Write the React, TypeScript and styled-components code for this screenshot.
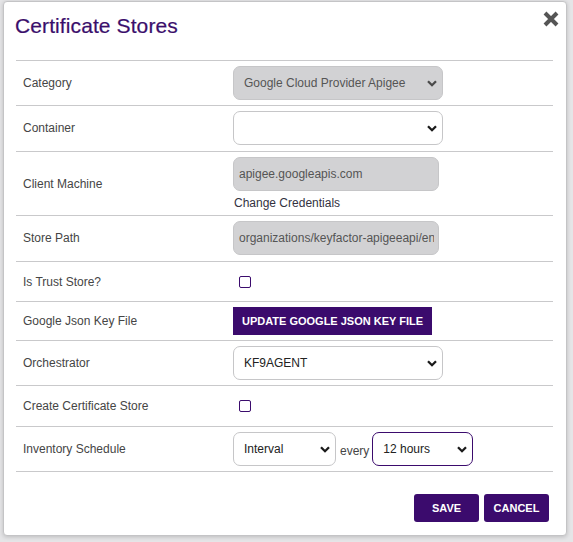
import React from "react";
import styled, { createGlobalStyle } from "styled-components";

const PURPLE = "#3b0b6d";

const GlobalStyle = createGlobalStyle`
  html, body {
    margin: 0;
    padding: 0;
    background: #e5e5e7;
    font-family: "Liberation Sans", Arial, sans-serif;
  }
  * { box-sizing: border-box; }
`;

const Page = styled.div`
  width: 573px;
  height: 542px;
  padding: 1px 0 0 3px;
  background: #e5e5e7;
  overflow: hidden;
`;

const Dialog = styled.div`
  width: 564px;
  background: #fff;
  border: 1px solid #c4c4c6;
  border-radius: 4px;
  box-shadow: 0 1px 4px rgba(0, 0, 0, 0.18);
  padding: 0 13px 13px 12px;
  display: flex;
  flex-direction: column;
`;

const Header = styled.div`
  height: 58px;
  display: flex;
  justify-content: space-between;
  align-items: flex-start;
  margin: 0 -6px 0 -1px;
`;

const Title = styled.h1`
  margin: 12px 0 0;
  font-size: 21px;
  line-height: 24px;
  font-weight: normal;
  color: #3a0e6b;
  letter-spacing: 0.1px;
  -webkit-text-stroke: 0.2px #3a0e6b;
`;

const CloseButton = styled.button`
  margin-top: 9px;
  padding: 0;
  border: 0;
  background: none;
  width: 16px;
  height: 16px;
  display: flex;
  cursor: pointer;
`;

const Table = styled.div`
  display: flex;
  flex-direction: column;
  border-bottom: 1px solid #c9c9cb;
`;

const Row = styled.div<{ $padB?: number }>`
  display: grid;
  grid-template-columns: 217px 1fr;
  align-items: center;
  border-top: 1px solid #c9c9cb;
  padding: 5px 0 ${(p) => p.$padB ?? 5}px;
`;

const Label = styled.div`
  padding-left: 7px;
  font-size: 12px;
  color: #454545;
`;

const Cell = styled.div<{ $inline?: boolean; $minH?: number }>`
  display: flex;
  flex-direction: ${(p) => (p.$inline ? "row" : "column")};
  align-items: ${(p) => (p.$inline ? "center" : "flex-start")};
  justify-content: ${(p) => (p.$inline ? "flex-start" : "center")};
  min-height: ${(p) => p.$minH ?? 28}px;
`;

const SelectWrap = styled.div<{ $w: number }>`
  position: relative;
  width: ${(p) => p.$w}px;
  height: 34px;
  flex: none;
`;

const Select = styled.select<{ $focus?: boolean }>`
  appearance: none;
  -webkit-appearance: none;
  width: 100%;
  height: 100%;
  border-radius: 7px;
  border: 1px solid ${(p) => (p.$focus ? PURPLE : "#c6c6c8")};
  background: #fff;
  padding: 0 24px 0 10px;
  font-family: inherit;
  font-size: 12px;
  color: #222;
  outline: none;
  &:disabled {
    background: #d2d2d4;
    color: #555;
    opacity: 1;
  }
`;

const Chevron = styled.svg<{ $muted?: boolean }>`
  position: absolute;
  right: 6px;
  top: 50%;
  margin-top: -3px;
  width: 10px;
  height: 7px;
  pointer-events: none;
  stroke: ${(p) => (p.$muted ? "#4a4a4a" : "#1a1a1a")};
`;

const TextInput = styled.input`
  width: 206px;
  height: 34px;
  border-radius: 7px;
  border: 1px solid #c6c6c8;
  background: #d2d2d4;
  padding: 0 4px 0 5px;
  font-family: inherit;
  font-size: 12px;
  color: #555;
  -webkit-text-fill-color: #555;
  opacity: 1;
  outline: none;
`;

const LinkText = styled.a`
  margin-top: 5px;
  line-height: 14px;
  font-size: 12px;
  color: #33323f;
  text-decoration: none;
  padding-left: 1px;
  cursor: pointer;
`;

const Checkbox = styled.input`
  appearance: none;
  -webkit-appearance: none;
  width: 12px;
  height: 12px;
  margin: 0 0 0 6px;
  border: 1.5px solid ${PURPLE};
  border-radius: 2px;
  background: #fff;
`;

const PrimaryButton = styled.button<{ $w?: number }>`
  height: 28px;
  min-width: ${(p) => (p.$w ? `${p.$w}px` : "auto")};
  padding: 0 8px;
  border: 0;
  border-radius: ${(p) => (p.$w ? "3px" : "0")};
  background: ${PURPLE};
  color: #fff;
  font-family: inherit;
  font-size: 11px;
  font-weight: bold;
  text-transform: uppercase;
  white-space: nowrap;
  cursor: pointer;
`;

const WideButton = styled(PrimaryButton)`
  width: 199px;
  padding: 0;
`;

const Every = styled.span`
  font-size: 12px;
  color: #454545;
  margin: 4px 3px 0 4px;
`;

const Footer = styled.div`
  display: flex;
  justify-content: flex-end;
  gap: 5px;
  margin-top: 22px;
  padding-right: 4px;
`;

function Caret({ muted }: { muted?: boolean }) {
  return (
    <Chevron $muted={muted} viewBox="0 0 10 7" fill="none" strokeWidth="2.3">
      <polyline points="1,1.2 5,5.2 9,1.2" />
    </Chevron>
  );
}

function Dropdown({
  width,
  value,
  options,
  disabled,
  focus,
}: {
  width: number;
  value: string;
  options: string[];
  disabled?: boolean;
  focus?: boolean;
}) {
  return (
    <SelectWrap $w={width}>
      <Select defaultValue={value} disabled={disabled} $focus={focus}>
        {options.map((o) => (
          <option key={o} value={o}>
            {o}
          </option>
        ))}
      </Select>
      <Caret muted={disabled} />
    </SelectWrap>
  );
}

export default function App() {
  return (
    <>
      <GlobalStyle />
      <Page>
        <Dialog>
          <Header>
            <Title>Certificate Stores</Title>
            <CloseButton aria-label="Close">
              <svg width="16" height="16" viewBox="0 0 16 16">
                <path
                  d="M2 2 L14 14 M14 2 L2 14"
                  stroke="#555"
                  strokeWidth="4"
                  strokeLinecap="butt"
                />
              </svg>
            </CloseButton>
          </Header>
          <Table>
            <Row>
              <Label>Category</Label>
              <Cell>
                <Dropdown
                  width={210}
                  value="Google Cloud Provider Apigee"
                  options={["Google Cloud Provider Apigee"]}
                  disabled
                />
              </Cell>
            </Row>
            <Row $padB={6}>
              <Label>Container</Label>
              <Cell>
                <Dropdown width={210} value="" options={[""]} />
              </Cell>
            </Row>
            <Row>
              <Label>Client Machine</Label>
              <Cell>
                <TextInput readOnly disabled value="apigee.googleapis.com" />
                <LinkText>Change Credentials</LinkText>
              </Cell>
            </Row>
            <Row $padB={6}>
              <Label>Store Path</Label>
              <Cell>
                <TextInput
                  readOnly
                  disabled
                  value="organizations/keyfactor-apigeeapi/environments/test/keystores"
                />
              </Cell>
            </Row>
            <Row>
              <Label>Is Trust Store?</Label>
              <Cell $minH={29}>
                <Checkbox type="checkbox" />
              </Cell>
            </Row>
            <Row>
              <Label>Google Json Key File</Label>
              <Cell>
                <WideButton>Update Google Json Key File</WideButton>
              </Cell>
            </Row>
            <Row>
              <Label>Orchestrator</Label>
              <Cell>
                <Dropdown width={210} value="KF9AGENT" options={["KF9AGENT"]} />
              </Cell>
            </Row>
            <Row>
              <Label>Create Certificate Store</Label>
              <Cell $minH={30}>
                <Checkbox type="checkbox" />
              </Cell>
            </Row>
            <Row>
              <Label>Inventory Schedule</Label>
              <Cell $inline>
                <Dropdown width={103} value="Interval" options={["Interval"]} />
                <Every>every</Every>
                <Dropdown width={101} value="12 hours" options={["12 hours"]} focus />
              </Cell>
            </Row>
          </Table>
          <Footer>
            <PrimaryButton $w={65}>Save</PrimaryButton>
            <PrimaryButton $w={65}>Cancel</PrimaryButton>
          </Footer>
        </Dialog>
      </Page>
    </>
  );
}
